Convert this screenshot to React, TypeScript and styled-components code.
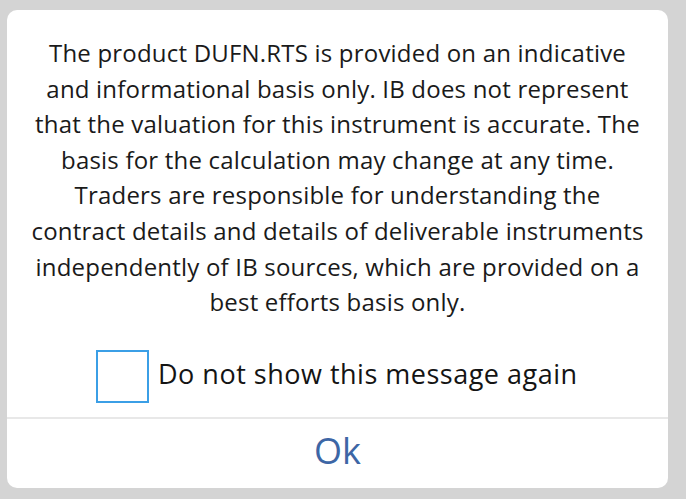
import React, { useState } from "react";
import styled, { createGlobalStyle } from "styled-components";

const GlobalStyle = createGlobalStyle`
  html, body {
    margin: 0;
    padding: 0;
    background: #d4d4d4;
  }
  * {
    box-sizing: border-box;
  }
`;

const Page = styled.div`
  width: 686px;
  height: 499px;
  padding: 10px 18px 11px 7px;
  font-family: "Open Sans", Lato, "Liberation Sans", sans-serif;
`;

const Card = styled.div`
  width: 661px;
  height: 478px;
  background: #ffffff;
  border-radius: 10px;
  display: flex;
  flex-direction: column;
  overflow: hidden;
`;

const Message = styled.p`
  margin: 0;
  padding: 25px 0 0;
  font-size: 24px;
  letter-spacing: 0.2px;
  line-height: 35.6px;
  color: #1a1a1a;
  text-align: center;
  white-space: nowrap;
`;

const CheckRow = styled.label`
  display: flex;
  align-items: center;
  gap: 9px;
  padding-left: 89px;
  margin-top: 30px;
  cursor: pointer;
`;

const Box = styled.span<{ $checked: boolean }>`
  width: 53px;
  height: 53px;
  border: 2px solid #3b9fe6;
  background: ${(p) => (p.$checked ? "#3b9fe6" : "#fff")};
  flex-shrink: 0;
`;

const CheckLabel = styled.span`
  font-size: 27px;
  letter-spacing: 0.5px;
  color: #141414;
  margin-bottom: 6px;
`;

const Footer = styled.div`
  margin-top: auto;
  height: 71px;
  border-top: 2px solid #e8e8e8;
  display: flex;
  align-items: center;
  justify-content: center;
`;

const OkButton = styled.button`
  border: none;
  background: none;
  font-family: inherit;
  font-size: 36px;
  color: #3d66a5;
  padding: 0 0 6px;
  cursor: pointer;
`;

const lines = [
  "The product DUFN.RTS is provided on an indicative",
  "and informational basis only. IB does not represent",
  "that the valuation for this instrument is accurate. The",
  "basis for the calculation may change at any time.",
  "Traders are responsible for understanding the",
  "contract details and details of deliverable instruments",
  "independently of IB sources, which are provided on a",
  "best efforts basis only.",
];

export default function App() {
  const [checked, setChecked] = useState(false);
  return (
    <>
      <GlobalStyle />
      <Page>
        <Card>
          <Message>
            {lines.map((l, i) => (
              <React.Fragment key={i}>
                {l}
                {i < lines.length - 1 && <br />}
              </React.Fragment>
            ))}
          </Message>
          <CheckRow onClick={() => setChecked(!checked)}>
            <Box $checked={checked} />
            <CheckLabel>Do not show this message again</CheckLabel>
          </CheckRow>
          <Footer>
            <OkButton>Ok</OkButton>
          </Footer>
        </Card>
      </Page>
    </>
  );
}
